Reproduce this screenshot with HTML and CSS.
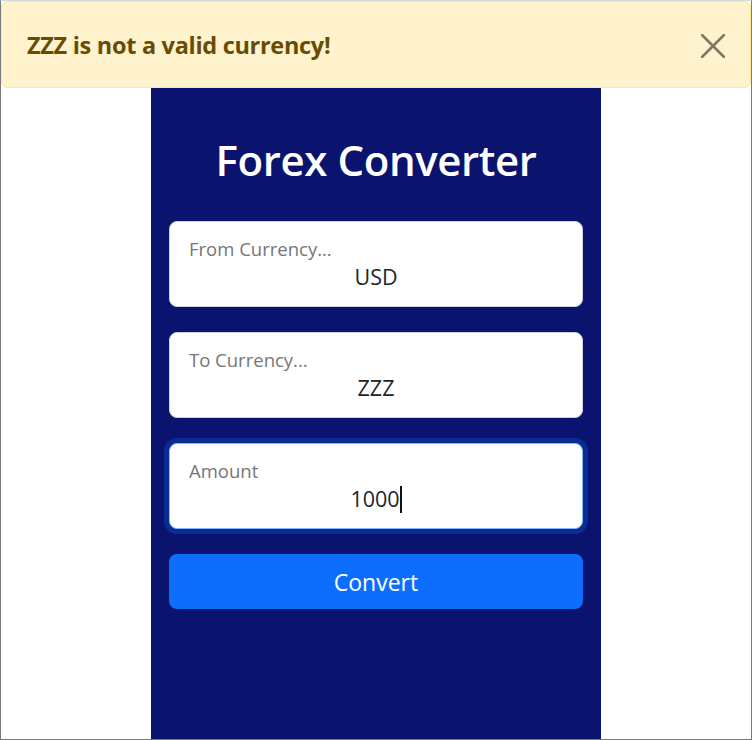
FILE: index.html
```html
<!DOCTYPE html>
<html lang="en">
<head>
<meta charset="utf-8">
<title>Forex Converter</title>
<link rel="stylesheet" href="styles.css">
</head>
<body>
<div class="frame">
  <div class="alert">
    <strong class="alert-text">ZZZ is not a valid currency!</strong>
    <button class="close" aria-label="Close">
      <svg width="24" height="24" viewBox="0 0 24 24"><path d="M1 1 L23 23 M23 1 L1 23" stroke="#7f7866" stroke-width="2.6" stroke-linecap="round" fill="none"/></svg>
    </button>
  </div>
  <main class="panel">
    <h1 class="title">Forex Converter</h1>
    <form class="form">
      <div class="field">
        <span class="label">From Currency...</span>
        <span class="value">USD</span>
      </div>
      <div class="field">
        <span class="label">To Currency...</span>
        <span class="value">ZZZ</span>
      </div>
      <div class="field focused">
        <span class="label">Amount</span>
        <span class="value">1000<span class="caret"></span></span>
      </div>
      <button class="btn" type="button">Convert</button>
    </form>
  </main>
</div>
</body>
</html>
```
FILE: styles.css
```css
* { box-sizing: border-box; }
html, body { margin: 0; padding: 0; }
body { font-family: "Open Sans", "Noto Sans", sans-serif; background: #fff; }
.frame {
  width: 752px; height: 740px;
  border: 1px solid #7a7a7a; border-top: 1px solid #d8d8d8;
  display: flex; flex-direction: column; align-items: center;
  overflow: hidden;
}
.alert {
  width: 100%;
  height: 87px;
  flex: none;
  background: #fff3cd;
  border: 1px solid #ffe69c;
  border-radius: 6px;
  color: #664d03;
  display: flex; align-items: center; justify-content: space-between;
  padding: 0 24px 0 25px;
}
.alert-text { font-size: 23.5px; font-weight: 700; letter-spacing: -0.3px; }
.close { background: none; border: 0; padding: 0; width: 26px; height: 26px; display: flex; align-items: center; justify-content: center; margin-top: 2px; }
.panel {
  width: 450px; flex: 1;
  background: #0a136d;
  padding: 43px 18px 0;
}
.title {
  margin: 0 0 32px; text-align: center; color: #fff;
  font-size: 42px; font-weight: 600; line-height: 58px; letter-spacing: -0.4px;
}
.form { display: flex; flex-direction: column; gap: 25px; }
.field {
  height: 86px; background: #fff; border: 1px solid #ced4da; border-radius: 8px;
  display: flex; flex-direction: column; padding: 14px 19px 0;
}
.focused { border-color: #86b7fe; box-shadow: 0 0 0 5px #0b2c93; }
.label { color: #767676; font-size: 18.5px; line-height: 26px; }
.value { color: #212529; font-size: 21.5px; line-height: 32px; text-align: center; margin-top: -1px; }
.caret { display: inline-block; width: 2px; height: 27px; background: #111; vertical-align: -6px; margin-left: 0; }
.btn {
  height: 55px; border: 0; border-radius: 8px; background: #0d6efd; color: #fff;
  font-family: inherit; font-size: 23px; padding: 0;
}
```
